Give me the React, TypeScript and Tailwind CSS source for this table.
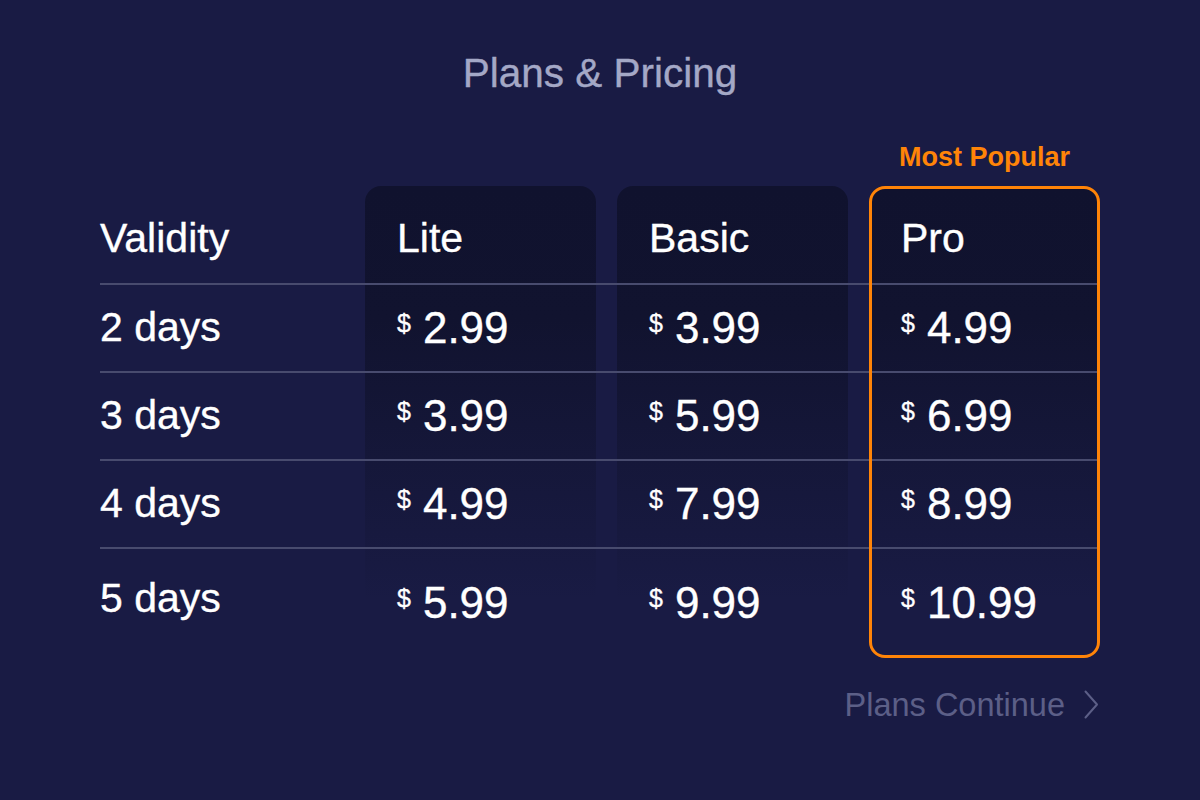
const rows = [
  { days: "2 days", prices: ["2.99", "3.99", "4.99"] },
  { days: "3 days", prices: ["3.99", "5.99", "6.99"] },
  { days: "4 days", prices: ["4.99", "7.99", "8.99"] },
  { days: "5 days", prices: ["5.99", "9.99", "10.99"] },
]

const plans = ["Lite", "Basic", "Pro"]

const cardBg =
  "bg-[linear-gradient(to_bottom,#10122e_0%,#11132f_28%,rgba(25,27,68,0)_88%)]"

const heavy = "[-webkit-text-stroke:0.35px_currentColor]"

function Price({ value }: { value: string }) {
  return (
    <div className={`flex items-start pl-8 text-white ${heavy}`}>
      <span className="mt-[5px] mr-[12px] text-[25px] leading-none">$</span>
      <span className="text-[44px] leading-none">{value}</span>
    </div>
  )
}

export default function App() {
  const rowStarts = ["row-start-2", "row-start-3", "row-start-4", "row-start-5"]
  const colStarts = ["col-start-2", "col-start-3", "col-start-4"]

  return (
    <div
      className="min-h-[800px] w-full bg-[#191b44] flex flex-col items-center"
      style={{ fontFamily: '"Liberation Sans", Arial, sans-serif' }}
    >
      <h1 className={`mt-[50px] text-[40.5px] leading-[46px] text-[#a4a8c6] ${heavy}`}>Plans &amp; Pricing</h1>

      <div className="mt-[46px] w-[1000px] grid grid-cols-[265px_252px_252px_231px]">
        <div className="col-start-4 text-center text-[27px] leading-[30px] font-bold text-[#ff8408]">
          Most Popular
        </div>
      </div>

      <div className="mt-[14px] w-[1000px] grid grid-cols-[265px_252px_252px_231px] grid-rows-[98px_88px_88px_88px_110px]">
        {/* column cards */}
        <div className={`col-start-2 row-start-1 row-span-5 w-[231px] rounded-2xl ${cardBg}`} />
        <div className={`col-start-3 row-start-1 row-span-5 w-[231px] rounded-2xl ${cardBg}`} />
        <div className={`col-start-4 row-start-1 row-span-5 w-[231px] rounded-2xl ${cardBg}`} />

        {/* row separators */}
        {rowStarts.map((r) => (
          <div key={r} className={`col-span-4 col-start-1 ${r} self-start h-[2px] mr-[3px] -mt-px bg-[#484b6e]`} />
        ))}

        {/* header */}
        <div className={`col-start-1 row-start-1 flex items-center pt-2 text-[41px] text-white ${heavy}`}>Validity</div>
        {plans.map((p, i) => (
          <div key={p} className={`${colStarts[i]} row-start-1 flex items-center pt-2 pl-8 text-[41px] text-white ${heavy}`}>
            {p}
          </div>
        ))}

        {/* body */}
        {rows.map((row, ri) => (
          <div key={row.days} className="contents">
            <div className={`col-start-1 ${rowStarts[ri]} flex items-center text-[41px] text-white ${heavy} ${ri === 3 ? "pb-[8px]" : ""}`}>
              {row.days}
            </div>
            {row.prices.map((price, ci) => (
              <div key={ci} className={`${colStarts[ci]} ${rowStarts[ri]} flex items-center`}>
                <Price value={price} />
              </div>
            ))}
          </div>
        ))}

        {/* popular outline */}
        <div className="col-start-4 row-start-1 row-span-5 rounded-2xl border-[3px] border-[#ff8408] pointer-events-none" />
      </div>

      <div className="mt-[28px] w-[1000px] flex justify-end items-center gap-[19px] pr-[1px]">
        <span className="text-[32.5px] leading-[38px] text-[#5c5f87]">Plans Continue</span>
        <svg width="15" height="30" viewBox="0 0 15 30" fill="none">
          <polyline points="1.5,1.5 13,14.5 1.5,27.5" stroke="#5c5f87" strokeWidth="2" strokeLinejoin="round" strokeLinecap="round" />
        </svg>
      </div>
    </div>
  )
}
